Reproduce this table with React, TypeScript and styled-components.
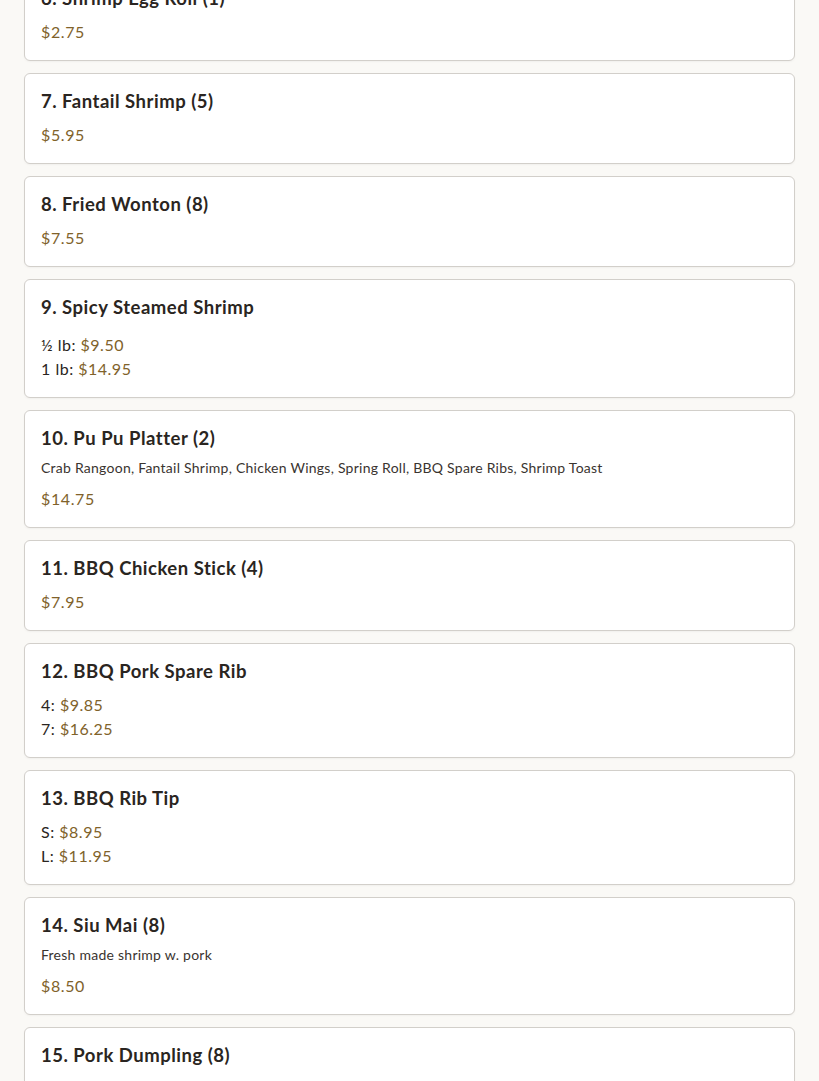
import React from "react";
import styled, { createGlobalStyle } from "styled-components";

type Option = { label: string; price: string };
type Item = {
  name: string;
  description?: string;
  price?: string;
  options?: Option[];
};

const items: Item[] = [
  { name: "6. Shrimp Egg Roll (1)", price: "$2.75" },
  { name: "7. Fantail Shrimp (5)", price: "$5.95" },
  { name: "8. Fried Wonton (8)", price: "$7.55" },
  {
    name: "9. Spicy Steamed Shrimp",
    options: [
      { label: "½ lb", price: "$9.50" },
      { label: "1 lb", price: "$14.95" },
    ],
  },
  {
    name: "10. Pu Pu Platter (2)",
    description:
      "Crab Rangoon, Fantail Shrimp, Chicken Wings, Spring Roll, BBQ Spare Ribs, Shrimp Toast",
    price: "$14.75",
  },
  { name: "11. BBQ Chicken Stick (4)", price: "$7.95" },
  {
    name: "12. BBQ Pork Spare Rib",
    options: [
      { label: "4", price: "$9.85" },
      { label: "7", price: "$16.25" },
    ],
  },
  {
    name: "13. BBQ Rib Tip",
    options: [
      { label: "S", price: "$8.95" },
      { label: "L", price: "$11.95" },
    ],
  },
  {
    name: "14. Siu Mai (8)",
    description: "Fresh made shrimp w. pork",
    price: "$8.50",
  },
  { name: "15. Pork Dumpling (8)", price: "$8.50" },
];

const GlobalStyle = createGlobalStyle`
  html, body {
    margin: 0;
    padding: 0;
    background: #faf9f6;
    font-family: "Lato", "Open Sans", sans-serif;
    color: #2a2521;
    overflow: hidden;
  }
`;

const Page = styled.main`
  padding: 0 24px;
  height: 1081px;
  overflow: hidden;
`;

const List = styled.div`
  display: flex;
  flex-direction: column;
  gap: 12px;
  margin-top: -30px;
`;

const Card = styled.article`
  background: #ffffff;
  border: 1px solid #d2cfca;
  border-radius: 6px;
  padding: 16px;
  box-shadow: 0 1px 2px rgba(0, 0, 0, 0.04);
`;

const Title = styled.h3`
  margin: 0 0 8px;
  font-size: 18.5px;
  line-height: 22px;
  font-weight: 700;
  letter-spacing: 0.5px;
  color: #2a2521;
`;

const Description = styled.p`
  margin: 1px 0 6px;
  font-size: 14px;
  line-height: 21px;
  letter-spacing: 0.25px;
  color: #3a3430;
`;

const Price = styled.div`
  padding-top: 3px;
  font-size: 16px;
  line-height: 24px;
  letter-spacing: 0.6px;
  color: #80622a;
`;

const Options = styled.ul`
  list-style: none;
  margin: 0;
  padding: 3px 0 0;
`;

const OptionRow = styled.li`
  font-size: 16px;
  line-height: 24px;
  letter-spacing: 0.5px;
  color: #2a2521;
`;

/* the fraction glyph sits in a taller line box, as in the original */
const Label = styled.span<{ $tall?: boolean }>`
  display: inline-block;
  padding-top: ${(p) => (p.$tall ? "4px" : "0")};
`;

const OptionPrice = styled.span`
  color: #80622a;
`;

const MenuCard: React.FC<{ item: Item }> = ({ item }) => (
  <Card>
    <Title>{item.name}</Title>
    {item.description && <Description>{item.description}</Description>}
    {item.price && <Price>{item.price}</Price>}
    {item.options && (
      <Options>
        {item.options.map((o) => (
          <OptionRow key={o.label}>
            <Label $tall={o.label.includes("½")}>{o.label}:</Label>{" "}
            <OptionPrice>{o.price}</OptionPrice>
          </OptionRow>
        ))}
      </Options>
    )}
  </Card>
);

export default function App() {
  return (
    <>
      <GlobalStyle />
      <Page>
        <List>
          {items.map((item) => (
            <MenuCard key={item.name} item={item} />
          ))}
        </List>
      </Page>
    </>
  );
}
